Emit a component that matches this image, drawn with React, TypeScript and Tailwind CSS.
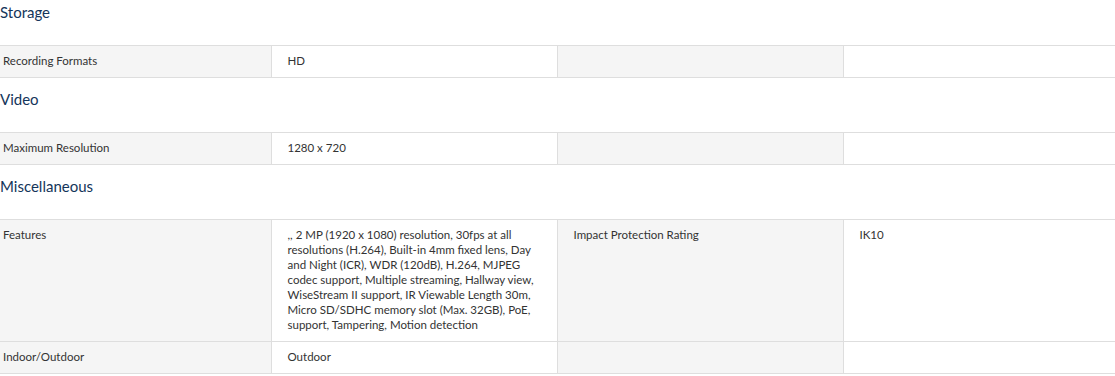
const sections = [
  {
    title: 'Storage',
    rows: [['Recording Formats', 'HD', '', '']],
  },
  {
    title: 'Video',
    rows: [['Maximum Resolution', '1280 x 720', '', '']],
  },
  {
    title: 'Miscellaneous',
    rows: [
      [
        'Features',
        ',, 2 MP (1920 x 1080) resolution, 30fps at all resolutions (H.264), Built-in 4mm fixed lens, Day and Night (ICR), WDR (120dB), H.264, MJPEG codec support, Multiple streaming, Hallway view, WiseStream II support, IR Viewable Length 30m, Micro SD/SDHC memory slot (Max. 32GB), PoE, support, Tampering, Motion detection',
        'Impact Protection Rating',
        'IK10',
      ],
      ['Indoor/Outdoor', 'Outdoor', '', ''],
    ],
  },
]

function SpecTable({ rows }: { rows: string[][] }) {
  return (
    <table className="w-full table-fixed border-collapse text-[11.5px] leading-[15px] text-[#333]">
      <colgroup>
        <col className="w-[271px]" />
        <col className="w-[286px]" />
        <col className="w-[286px]" />
        <col />
      </colgroup>
      <tbody>
        {rows.map((row, i) => (
          <tr key={i} className="border-y border-[#dedede]">
            <td className="bg-[#f5f5f5] pl-[3px] pr-4 pt-[7px] pb-[9px] align-top border-r border-[#dedede]">{row[0]}</td>
            <td className="bg-white px-4 pt-[7px] pb-[9px] align-top border-r border-[#dedede]">{row[1]}</td>
            <td className="bg-[#f5f5f5] px-4 pt-[7px] pb-[9px] align-top border-r border-[#dedede]">{row[2]}</td>
            <td className="bg-white px-4 pt-[7px] pb-[9px] align-top">{row[3]}</td>
          </tr>
        ))}
      </tbody>
    </table>
  )
}

export default function App() {
  return (
    <div className="w-[1115px] bg-white" style={{ fontFamily: 'Lato, "Noto Sans", sans-serif' }}>
      {sections.map((s, i) => (
        <div key={s.title} className={i > 0 ? 'mt-[9px]' : ''}>
          <h3 className="text-[15px] leading-[24px] text-[#14355a] mb-[21px]">{s.title}</h3>
          <SpecTable rows={s.rows} />
        </div>
      ))}
    </div>
  )
}
